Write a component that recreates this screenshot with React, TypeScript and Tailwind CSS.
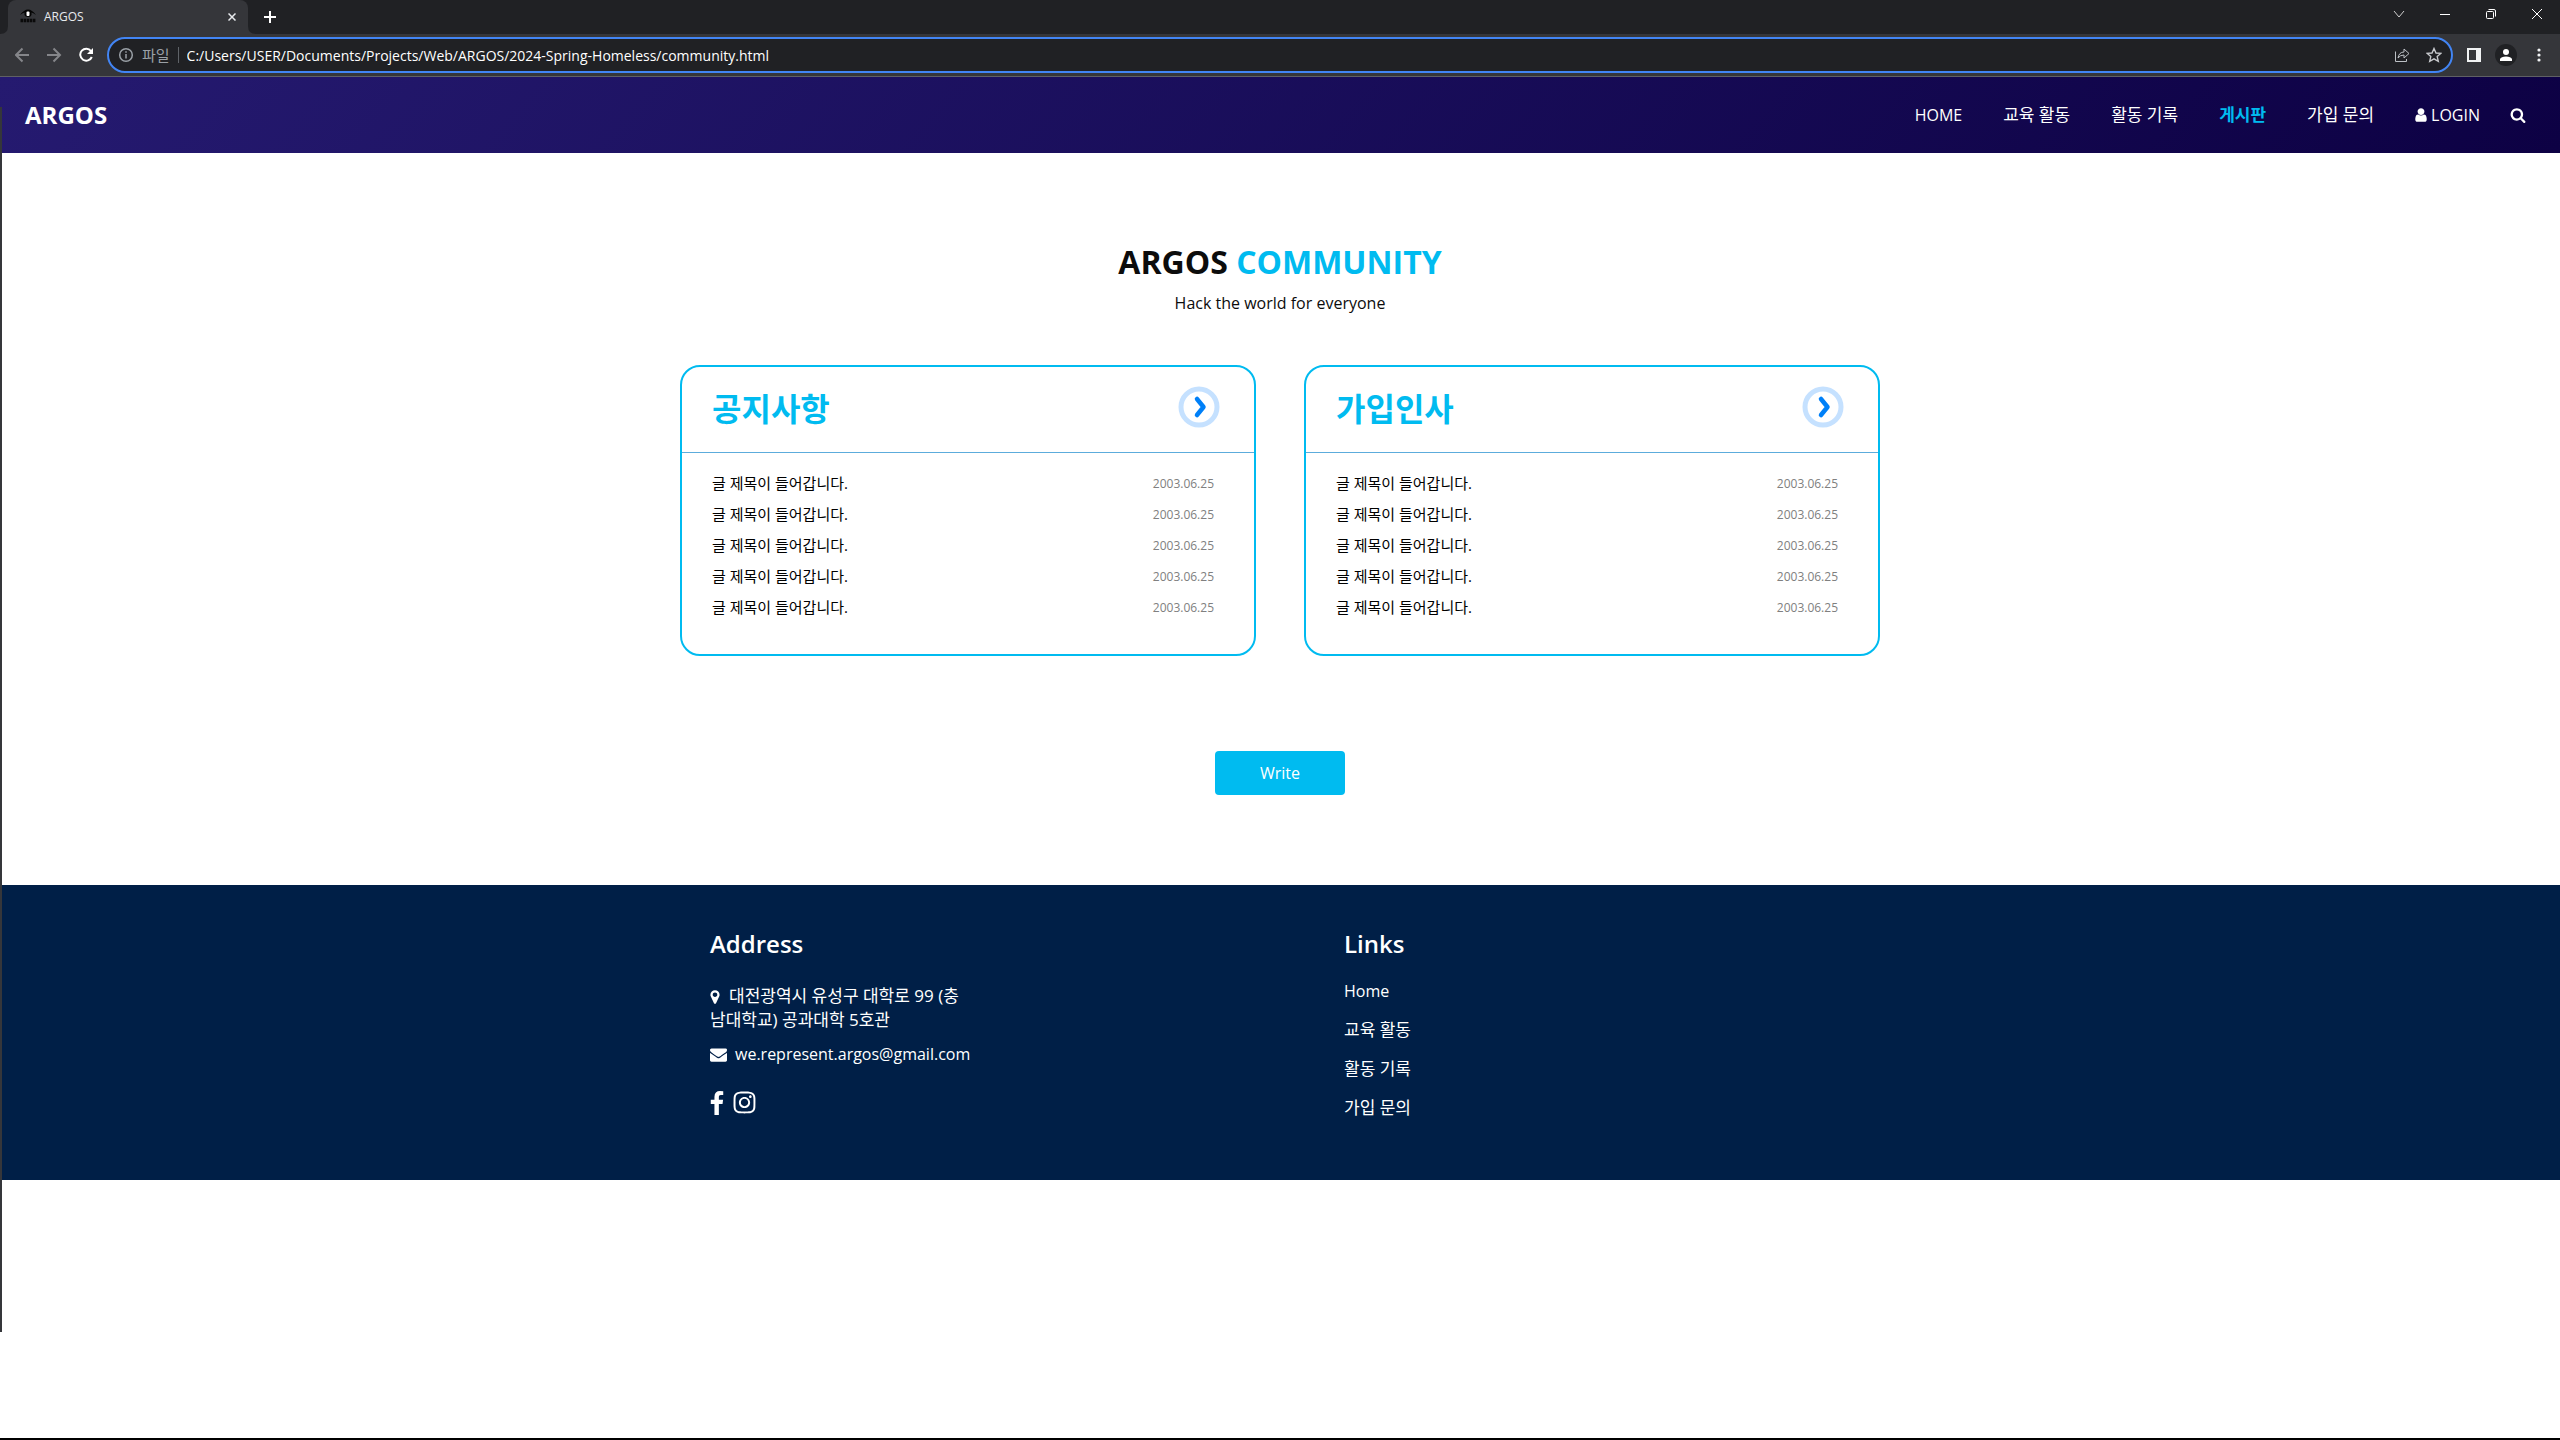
import { FaInstagram } from "react-icons/fa"

const posts = [1, 2, 3, 4, 5].map((id) => ({ id, title: "글 제목이 들어갑니다.", date: "2003.06.25" }))

const boards = [
  { name: "공지사항", posts },
  { name: "가입인사", posts },
]

const navItems = [
  { label: "교육 활동", active: false },
  { label: "활동 기록", active: false },
  { label: "게시판", active: true },
  { label: "가입 문의", active: false },
]

const footerLinks = ["교육 활동", "활동 기록", "가입 문의"]

function UserIcon() {
  return (
    <svg className="h-4 w-3" viewBox="0 0 1280 1792" fill="currentColor">
      <path d="M1280 1399q0 109-62.5 187t-150.5 78h-854q-88 0-150.5-78t-62.5-187q0-85 8.5-160.5t31.5-152 58.5-131 94-89 134.5-34.5q131 128 313 128t313-128q76 0 134.5 34.5t94 89 58.5 131 31.5 152 8.5 160.5zm-256-887q0 159-112.5 271.5t-271.5 112.5-271.5-112.5-112.5-271.5 112.5-271.5 271.5-112.5 271.5 112.5 112.5 271.5z" />
    </svg>
  )
}

function SearchIcon() {
  return (
    <svg className="size-4" viewBox="0 0 1664 1792" fill="currentColor">
      <path d="M1152 832q0-185-131.5-316.5t-316.5-131.5-316.5 131.5-131.5 316.5 131.5 316.5 316.5 131.5 316.5-131.5 131.5-316.5zm512 832q0 52-38 90t-90 38q-54 0-90-38l-343-342q-179 124-399 124-143 0-273.5-55.5t-225-150-150-225-55.5-273.5 55.5-273.5 150-225 225-150 273.5-55.5 273.5 55.5 225 150 150 225 55.5 273.5q0 220-124 399l343 343q37 37 37 90z" />
    </svg>
  )
}

function MarkerIcon() {
  return (
    <svg className="mr-[9px] inline h-4 w-[10px]" viewBox="0 0 1024 1792" fill="currentColor">
      <path d="M768 640q0-106-75-181t-181-75-181 75-75 181 75 181 181 75 181-75 75-181zm256 0q0 109-33 179l-364 774q-16 33-47.5 52t-67.5 19-67.5-19-46.5-52l-365-774q-33-70-33-179 0-212 150-362t362-150 362 150 150 362z" />
    </svg>
  )
}

function MailIcon() {
  return (
    <svg className="size-[17px]" viewBox="0 0 1792 1792" fill="currentColor">
      <path d="M1792 710v794q0 66-47 113t-113 47h-1472q-66 0-113-47t-47-113v-794q44 49 101 87 362 246 497 345 57 42 92.5 65.5t94.5 48 110 24.5h2q51 0 110-24.5t94.5-48 92.5-65.5q170-123 498-345 57-39 100-87zm0-294q0 79-49 151t-122 123q-376 261-468 325-10 7-42.5 31t-54 38.5-52 32.5-57.5 27-50 9h-2q-23 0-50-9t-57.5-27-52-32.5-54-38.5-42.5-31q-91-64-262-182.5t-205-142.5q-62-42-117-115.5t-55-136.5q0-78 41.5-130t118.5-52h1472q65 0 112.5 47t47.5 113z" />
    </svg>
  )
}

function FacebookIcon() {
  return (
    <svg className="h-6 w-[14px]" viewBox="479 0 864 1664" fill="currentColor">
      <path d="M1343 12v264h-157q-86 0-116 36t-30 108v189h293l-39 296h-254v759h-306v-759h-255v-296h255v-218q0-186 104-288.5t277-102.5q147 0 228 12z" />
    </svg>
  )
}

function BrowserTabs() {
  return (
    <div className="flex h-[34px] items-stretch bg-[#202124]">
      <svg className="size-2 self-end" viewBox="0 0 8 8" fill="#35363a">
        <path d="M8 0V8H0Q8 8 8 0Z" />
      </svg>
      <div className="flex w-[240px] items-center rounded-t-lg bg-[#35363a] pl-3 pr-2 text-[12px] text-[#e8eaed]">
        <svg className="size-4" viewBox="0 0 16 16">
          <path d="M0 6Q4 0.5 8 0.500T16 6Q13 3.500 11.500 3.500V6Q11 8 8 8T4.500 6V3.500Q3 3.500 0 6Z" fill="#050505" />
          <rect x="6.500" y="2.500" width="3" height="4.500" rx="1" fill="#fff" />
          <path d="M0.500 11.500H15.500" stroke="#0a0a0a" strokeWidth="3.500" strokeDasharray="2.500 0.600" />
        </svg>
        <span className="ml-2 flex-1">ARGOS</span>
        <button aria-label="탭 닫기" className="flex size-4 items-center justify-center">
          <svg className="size-2" viewBox="0 0 8 8" fill="none" stroke="#e8eaed" strokeWidth="1.500">
            <path d="M0.500 0.500L7.500 7.500M7.500 0.500L0.500 7.500" />
          </svg>
        </button>
      </div>
      <svg className="size-2 self-end" viewBox="0 0 8 8" fill="#35363a">
        <path d="M0 0V8H8Q0 8 0 0Z" />
      </svg>
      <button aria-label="새 탭" className="ml-1 flex w-5 items-center justify-center">
        <svg className="size-3" viewBox="0 0 12 12" stroke="#fff" strokeWidth="2">
          <path d="M6 0V12M0 6H12" />
        </svg>
      </button>
      <div className="ml-auto flex h-7 items-center">
        <button aria-label="탭 검색" className="flex w-[46px] justify-center">
          <svg className="size-3" viewBox="0 0 12 12" fill="none" stroke="#d0d0d0">
            <path d="M1 3L6 9L11 3" />
          </svg>
        </button>
        <button aria-label="최소화" className="flex w-[46px] justify-center">
          <svg className="size-3" viewBox="0 0 12 12" stroke="#fff">
            <path d="M1 6.500H11" />
          </svg>
        </button>
        <button aria-label="이전 크기로 복원" className="flex w-[46px] justify-center">
          <svg className="size-3" viewBox="0 0 12 12" fill="none" stroke="#fff">
            <rect x="1.500" y="3.500" width="7" height="7" rx="1" />
            <path d="M3.500 1.500H9Q10.500 1.500 10.500 3V8.500" />
          </svg>
        </button>
        <button aria-label="닫기" className="flex w-[46px] justify-center">
          <svg className="size-3" viewBox="0 0 12 12" stroke="#fff">
            <path d="M1 1L11 11M11 1L1 11" />
          </svg>
        </button>
      </div>
    </div>
  )
}

function BrowserToolbar() {
  return (
    <div className="flex h-[43px] items-center border-b border-[#5f6064] bg-[#35363a] pl-[15px] pr-[19px]">
      <div className="flex gap-4">
        <button aria-label="뒤로">
          <svg className="size-4" viewBox="0 0 16 16" fill="none" stroke="#85868a" strokeWidth="2">
            <path d="M14 8H1.500M7.500 1.500L1 8L7.500 14.500" />
          </svg>
        </button>
        <button aria-label="앞으로">
          <svg className="size-4" viewBox="0 0 16 16" fill="none" stroke="#85868a" strokeWidth="2">
            <path d="M0 8H12.500M6.500 1.500L13 8L6.500 14.500" />
          </svg>
        </button>
        <button aria-label="새로고침">
          <svg className="size-4" viewBox="0 0 16 16" fill="none" stroke="#fff" strokeWidth="2">
            <path d="M12 4A6 6 0 1 0 12.800 10" />
            <path d="M14 1V7H8Z" fill="#fff" stroke="none" />
          </svg>
        </button>
      </div>
      <div className="ml-3 flex h-9 min-w-0 flex-1 items-center rounded-full border-2 border-[#4285f4] bg-[#202124] pl-[9px] pr-[9px]">
        <svg className="size-4 shrink-0" viewBox="0 0 16 16" fill="none" stroke="#9aa0a6" strokeWidth="1.500">
          <circle cx="8" cy="8" r="6.300" />
          <path d="M8 7V11.500M8 4.300V5.800" />
        </svg>
        <span className="ml-2 shrink-0 text-[15px] text-[#9aa0a6]">파일</span>
        <span className="ml-2 h-4 w-px bg-[#5f6368]" />
        <input aria-label="주소창" defaultValue="C:/Users/USER/Documents/Projects/Web/ARGOS/2024-Spring-Homeless/community.html" className="ml-2 min-w-0 flex-1 bg-transparent text-[14px] text-white outline-none" />
        <button aria-label="공유">
          <svg className="size-4" viewBox="0 0 16 16" fill="none" stroke="#bdc1c6">
            <path d="M1.500 4.500V14.500H12.500V12M4 11Q5 5 10 5V2L15 6.500L10 11V8Q6 8 4 11Z" />
          </svg>
        </button>
        <button aria-label="북마크" className="ml-4">
          <svg className="size-4" viewBox="0 0 16 16" fill="none" stroke="#c8cacd" strokeWidth="1.400">
            <path d="M8 1.500L10 6L14.800 6.400L11.200 9.600L12.300 14.300L8 11.800L3.700 14.300L4.800 9.600L1.200 6.400L6 6Z" />
          </svg>
        </button>
      </div>
      <button aria-label="사이드 패널" className="ml-[14px]">
        <svg className="size-[14px]" viewBox="0 0 14 14">
          <path d="M0 0H14V14H0ZM2 2V12H9V2Z" fill="#f1f3f4" fillRule="evenodd" />
        </svg>
      </button>
      <button aria-label="프로필" className="ml-[14px] flex size-[22px] items-center justify-center rounded-full bg-[#202124]">
        <svg className="size-3" viewBox="0 0 12 12" fill="#fff">
          <circle cx="6" cy="3" r="3" />
          <path d="M0 12V10Q1 7.500 6 7.500T12 10V12Z" />
        </svg>
      </button>
      <button aria-label="메뉴" className="ml-5">
        <svg className="h-4 w-1" viewBox="0 0 4 16" fill="#f1f3f4">
          <circle cx="2" cy="3" r="1.600" />
          <circle cx="2" cy="8" r="1.600" />
          <circle cx="2" cy="13" r="1.600" />
        </svg>
      </button>
    </div>
  )
}

function SiteHeader() {
  return (
    <header className="flex h-[76px] items-center justify-between bg-[linear-gradient(130deg,#251a70,#0d0144)] pl-[25px] pr-[34px] text-white">
      <a href="#" className="text-[24px] font-bold">ARGOS</a>
      <nav className="flex items-center gap-[41px] text-[16px]">
        <a href="#">HOME</a>
        {
          navItems.map((item) => (
            <a key={item.label} href="#" className={item.active ? "text-[17px] font-bold text-[#00bbf0]" : "text-[17px]"}>{item.label}</a>
          ))
        }
        <div className="flex items-center gap-[30px]">
          <a href="#" className="flex items-center gap-1">
            <UserIcon />
            LOGIN
          </a>
          <button aria-label="검색"><SearchIcon /></button>
        </div>
      </nav>
    </header>
  )
}

function BoardCard({ board }: { board: any }) {
  return (
    <section className="h-[291px] rounded-[20px] border-2 border-[#00bbf0]">
      <div className="flex h-[86px] items-start justify-between border-b border-[#5cacdc] pl-[30px] pr-[34px] pt-[19px]">
        <h3 className="text-[32px] font-bold leading-[46px] text-[#00bbf0]">{board.name}</h3>
        <button aria-label={`${board.name} 더보기`}>
          <svg className="size-[42px]" viewBox="0 0 42 42" fill="none">
            <circle cx="21" cy="21" r="18" stroke="#c5e1ff" strokeWidth="5" />
            <path d="M19 13L25.500 21L19 29" stroke="#0080f8" strokeWidth="4.500" strokeLinecap="round" strokeLinejoin="round" />
          </svg>
        </button>
      </div>
      <ul className="pl-[30px] pr-10 pt-[15px]">
        {
          board.posts.map((post: any) => (
            <li key={post.id} className="flex h-[31px] items-center justify-between">
              <a href="#" className="text-[15px] text-black">{post.title}</a>
              <span className="text-[12px] text-[#808080]">{post.date}</span>
            </li>
          ))
        }
      </ul>
    </section>
  )
}

function SiteFooter() {
  return (
    <footer className="bg-[#001f47] text-[16px] text-white">
      <div className="mx-auto grid h-[295px] max-w-[1268px] grid-cols-2 px-16 pt-[41px]">
        <div>
          <h4 className="text-[24px] font-semibold leading-[36px]">Address</h4>
          <address className="mt-[22px] w-[262px] not-italic leading-6">
            <p className="break-all text-[17px]"><MarkerIcon />대전광역시 유성구 대학로 99 (충남대학교) 공과대학 5호관</p>
            <a href="#" className="mt-[10px] flex items-center gap-2"><MailIcon />we.represent.argos@gmail.com</a>
          </address>
          <div className="mt-6 flex items-center gap-2">
            <a href="#" aria-label="Facebook"><FacebookIcon /></a>
            <a href="#" aria-label="Instagram"><FaInstagram className="size-[25px]" /></a>
          </div>
        </div>
        <div className="pl-[64px]">
          <h4 className="text-[24px] font-semibold leading-[36px]">Links</h4>
          <ul className="mt-[9px]">
            <li className="flex h-[39px] items-center"><a href="#">Home</a></li>
            {
              footerLinks.map((link) => (
                <li key={link} className="flex h-[39px] items-center text-[17px]"><a href="#">{link}</a></li>
              ))
            }
          </ul>
        </div>
      </div>
    </footer>
  )
}

export default function App() {
  return (
    <div className="relative flex min-h-screen flex-col border-b-2 border-black bg-white font-['Open_Sans','Noto_Sans_CJK_KR',sans-serif]">
      <BrowserTabs />
      <BrowserToolbar />
      <SiteHeader />
      <main className="flex flex-col items-center px-6 pb-[90px] pt-[85px]">
        <h2 className="text-[32px] font-bold leading-[48px] text-[#0c0c0c]">
          ARGOS <span className="text-[#00bbf0]">COMMUNITY</span>
        </h2>
        <p className="mt-[5px] text-[16px] leading-6 text-[#0c0c0c]">Hack the world for everyone</p>
        <div className="mt-[50px] grid w-full max-w-[1200px] grid-cols-2 gap-12">
          {boards.map((board) => <BoardCard key={board.name} board={board} />)}
        </div>
        <button className="mt-[95px] h-11 w-[130px] rounded bg-[#00bbf0] text-[16px] text-white">Write</button>
      </main>
      <SiteFooter />
      {/* edge of the window lying behind */}
      <div className="absolute bottom-[106px] left-0 top-[107px] w-[2px] bg-[#35363a] shadow-md" />
    </div>
  )
}
